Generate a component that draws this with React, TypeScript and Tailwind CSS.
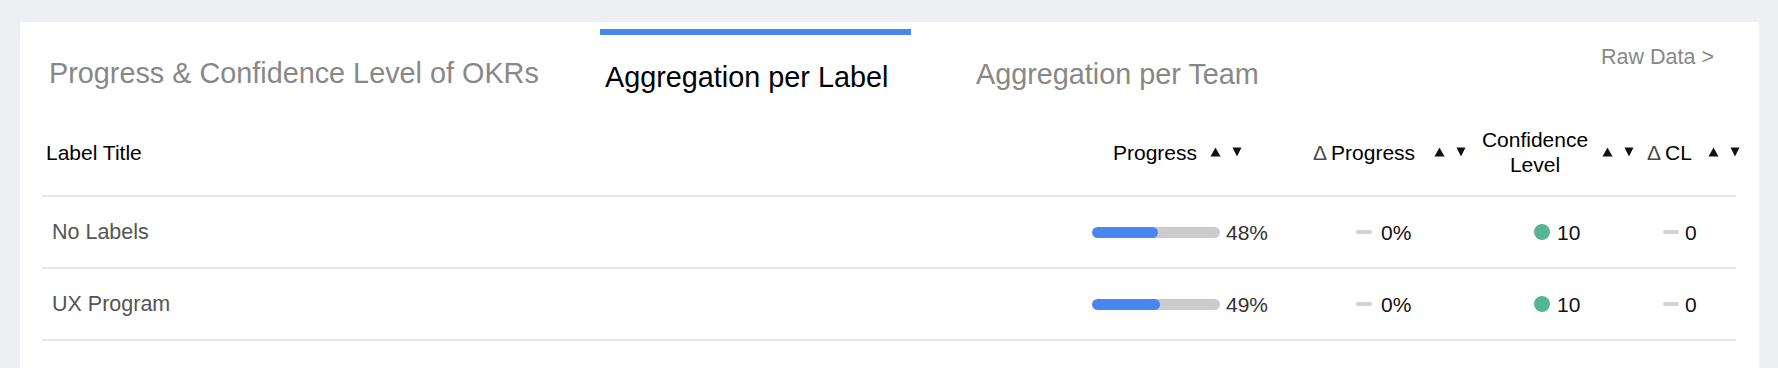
import React from "react";

function SortArrows({ className = "" }: { className?: string }) {
  return (
    <span className={`flex items-center gap-[11px] ${className}`}>
      <svg width="11" height="10" viewBox="0 0 11 10" className="block">
        <path d="M5.5 0.5 L10.5 9.5 L0.5 9.5 Z" fill="#111" />
      </svg>
      <svg width="10" height="10" viewBox="0 0 10 10" className="block">
        <path d="M0.5 0.5 L9.5 0.5 L5 9.5 Z" fill="#111" />
      </svg>
    </span>
  );
}

function Dash() {
  return <span className="block w-[16px] h-[4px] rounded-full bg-[#d2d2d2]" />;
}

const rows = [
  { label: "No Labels", progress: 48, dp: "0%", cl: "10", dcl: "0" },
  { label: "UX Program", progress: 49, dp: "0%", cl: "10", dcl: "0" },
];

export default function App() {
  return (
    <div
      className="w-[1778px] h-[368px] bg-[#eeeff3] overflow-hidden pt-[22px] pl-[20px]"
      style={{ fontFamily: '"Liberation Sans", Arial, Helvetica, sans-serif' }}
    >
      <div className="w-[1739px] h-[346px] bg-white pl-[22px] pr-[23px]">
        {/* Tabs */}
        <div className="flex items-start h-[90px]">
          <div className="w-[558px] pl-[7px] pt-[37px] text-[28.8px] leading-none text-[#888888]">
            Progress &amp; Confidence Level of OKRs
          </div>
          <div className="w-[311px] mt-[7px] border-t-[6px] border-[#4a86f0] pl-[5px] pt-[28px] text-[28.8px] leading-none text-black">
            Aggregation per Label
          </div>
          <div className="ml-[65px] pt-[38px] text-[28.8px] leading-none text-[#888888]">
            Aggregation per Team
          </div>
          <div className="ml-auto mr-[22px] pt-[25px] text-[21.5px] leading-none text-[#888888]">
            Raw Data &gt;
          </div>
        </div>

        {/* Header */}
        <div className="flex items-center h-[85px] pb-[3px] border-b-2 border-[#e6e6e6] text-[21px] leading-[25px] text-black">
          <div className="flex-1 pl-[4px]">Label Title</div>
          <div className="w-[210px] pl-[21px] flex items-center">
            <span>Progress</span>
            <SortArrows className="ml-[13px]" />
          </div>
          <div className="w-[172px] pl-[11px] flex items-center">
            <span className="text-[#4a4a4a] mr-[4px]">Δ</span>
            <span>Progress</span>
            <SortArrows className="ml-[19px]" />
          </div>
          <div className="w-[168px] pl-[7px] flex items-center">
            <span className="text-center w-[108px]">
              Confidence
              <br />
              Level
            </span>
            <SortArrows className="ml-[13px]" />
          </div>
          <div className="w-[94px] pl-[5px] flex items-center">
            <span className="text-[#4a4a4a] mr-[4px]">Δ</span>
            <span>CL</span>
            <SortArrows className="ml-[16px]" />
          </div>
        </div>

        {/* Rows */}
        {rows.map((r) => (
          <div
            key={r.label}
            className="flex items-center h-[72px] border-b-2 border-[#e6e6e6] text-[21px] leading-[25px]"
          >
            <div className="flex-1 pl-[10px] text-[21.5px] text-[#555555]">{r.label}</div>
            <div className="w-[210px] flex items-center">
              <div className="w-[128px] h-[11px] rounded-full bg-[#cccccc] overflow-hidden">
                <div
                  className="h-full rounded-full bg-[#4a86f0]"
                  style={{ width: `${(r.progress / 100) * 128 + 5}px` }}
                />
              </div>
              <span className="ml-[6px] text-[#333333]">{r.progress}%</span>
            </div>
            <div className="w-[172px] pl-[54px] flex items-center">
              <Dash />
              <span className="ml-[9px] text-[#111111]">{r.dp}</span>
            </div>
            <div className="w-[168px] pl-[60px] flex items-center">
              <span className="block w-[16px] h-[16px] rounded-full bg-[#55b594]" />
              <span className="ml-[7px] text-[#111111]">{r.cl}</span>
            </div>
            <div className="w-[94px] pl-[21px] flex items-center">
              <Dash />
              <span className="ml-[6px] text-[#111111]">{r.dcl}</span>
            </div>
          </div>
        ))}
      </div>
    </div>
  );
}
